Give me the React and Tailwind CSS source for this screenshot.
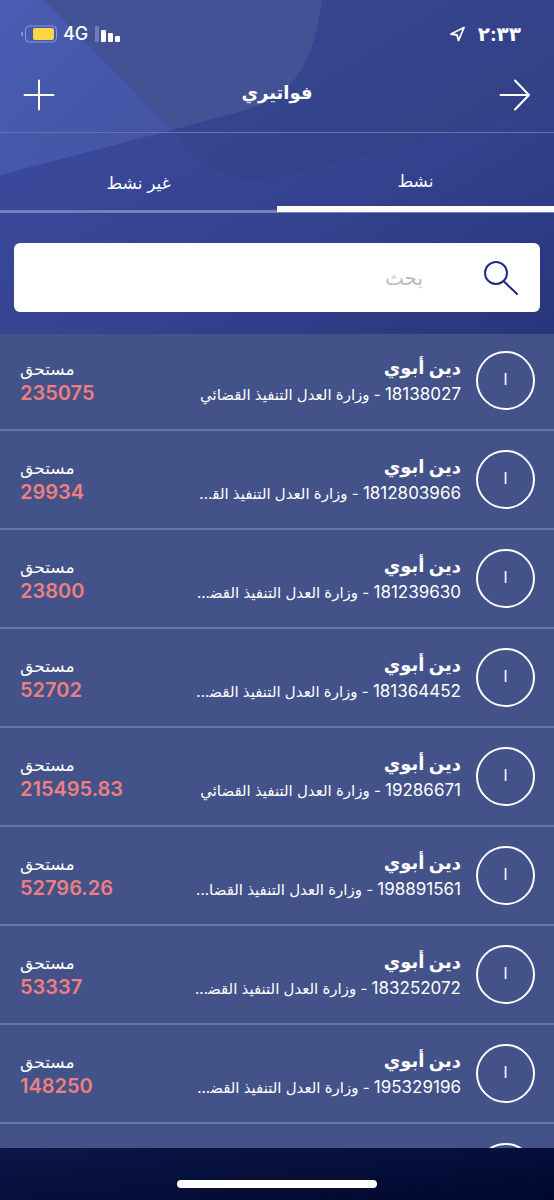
import React from "react";

const bills = [
  { name: "دين أبوي", account: "18138027", payee: "وزارة العدل التنفيذ القضائي", due: "235075" },
  { name: "دين ابوي", account: "1812803966", payee: "وزارة العدل التنفيذ الق\u200d...", due: "29934" },
  { name: "دين أبوي", account: "181239630", payee: "وزارة العدل التنفيذ القض\u200d...", due: "23800" },
  { name: "دين أبوي", account: "181364452", payee: "وزارة العدل التنفيذ القض\u200d...", due: "52702" },
  { name: "دين أبوي", account: "19286671", payee: "وزارة العدل التنفيذ القضائي", due: "215495.83" },
  { name: "دين أبوي", account: "198891561", payee: "وزارة العدل التنفيذ القضا...", due: "52796.26" },
  { name: "دين أبوي", account: "183252072", payee: "وزارة العدل التنفيذ القض\u200d...", due: "53337" },
  { name: "دين أبوي", account: "195329196", payee: "وزارة العدل التنفيذ القض\u200d...", due: "148250" },
];

function Backdrop() {
  return (
    <svg className="absolute inset-0 -z-10 h-full w-full" viewBox="0 0 554 334" preserveAspectRatio="none" aria-hidden="true">
      <defs>
        <linearGradient id="blade" x1="0" y1="0" x2="170" y2="150" gradientUnits="userSpaceOnUse">
          <stop offset="0" stopColor="#4a5db4" />
          <stop offset="1" stopColor="#4453a2" />
        </linearGradient>
        <linearGradient id="lower" x1="60" y1="90" x2="300" y2="500" gradientUnits="userSpaceOnUse">
          <stop offset="0" stopColor="#3b4a9d" />
          <stop offset="0.5" stopColor="#34428f" />
          <stop offset="1" stopColor="#28347a" />
        </linearGradient>
        <linearGradient id="upper" x1="300" y1="0" x2="400" y2="160" gradientUnits="userSpaceOnUse">
          <stop offset="0" stopColor="#364791" />
          <stop offset="1" stopColor="#324188" />
        </linearGradient>
      </defs>
      <rect width="554" height="334" fill="url(#lower)" />
      <path d="M0 0H44L172 130L0 175Z" fill="url(#blade)" />
      <path d="M44 0H322C317 32 312 58 294 80Q280 100 236 113L172 130Z" fill="#435295" />
      <path d="M172 130L236 113Q280 100 294 80C312 58 317 32 322 0H554V108L290 174C240 188 212 176 172 130Z" fill="url(#upper)" />
    </svg>
  );
}

function StatusBar() {
  return (
    <div dir="ltr" className="flex h-17 items-center justify-between pr-[33px] pl-5">
      <div className="flex items-center gap-1.5">
        <svg width="37" height="18" viewBox="0 0 37 18" role="img" aria-label="البطارية">
          <path d="M3 6Q1 7 1 9Q1 11 3 12Z" fill="#8e9ad0" />
          <rect x="5.5" y="1" width="31" height="16" rx="4" fill="none" stroke="#8e9ad0" />
          <rect x="13" y="3" width="21" height="12" rx="2" fill="#f8d749" />
        </svg>
        <span className="text-lg font-medium">4G</span>
        <svg width="26" height="16" viewBox="0 0 26 16" role="img" aria-label="قوة الإشارة">
          <rect x="1" y="0" width="4" height="16" rx="1" fill="#fff" opacity=".25" />
          <rect x="7" y="4" width="5" height="12" rx="1" fill="#fff" />
          <rect x="14" y="7" width="5" height="9" rx="1" fill="#fff" />
          <rect x="21" y="10" width="5" height="6" rx="1" fill="#fff" />
        </svg>
      </div>
      <div className="flex items-center gap-3">
        <svg width="16" height="16" viewBox="0 0 16 16" fill="none" stroke="#fff" strokeWidth="1.8" strokeLinejoin="round" aria-hidden="true">
          <path d="M14 1.5L1 8L7 9L8.5 14.5Z" />
        </svg>
        <time className="text-xl font-bold">٢:٣٣</time>
      </div>
    </div>
  );
}

function BillRow({ bill }) {
  return (
    <li className="flex h-[99px] shrink-0 items-end gap-[15px] border-b-2 border-[#6876ab] pr-[19px] pb-[19px] pl-5 first:h-[97px]">
      <div className="flex size-[59px] shrink-0 items-center justify-center rounded-full border-2 border-white pb-1 text-base">
        ا
      </div>
      <div className="flex min-w-0 flex-1 flex-col pb-[3px]">
        <h2 className="text-lg leading-7 font-bold">{bill.name}</h2>
        <p className="text-[15px] leading-6 whitespace-nowrap">
          <span className="text-[17px]">{bill.account}</span> - {bill.payee}
        </p>
      </div>
      <div dir="ltr" className="flex flex-col pb-[5px]">
        <span className="text-[17px] leading-6">مستحق</span>
        <strong className="text-xl leading-6 font-semibold text-[#ee7f80]">{bill.due}</strong>
      </div>
    </li>
  );
}

export default function App() {
  return (
    <div dir="rtl" lang="ar" className="flex h-screen flex-col overflow-hidden bg-[#435289] font-['Inter','DejaVu_Sans',sans-serif] text-white">
      <header className="relative isolate shrink-0">
        <Backdrop />
        <StatusBar />
        <div className="flex h-[65px] items-center justify-between border-b border-[#6674b3] px-[23px] pb-[11px]">
          <button type="button" aria-label="رجوع">
            <svg width="32" height="32" viewBox="0 0 32 32" fill="none" stroke="#fff" strokeWidth="2" strokeLinecap="round" strokeLinejoin="round">
              <path d="M1.5 16H30M16 1.5L30 16L16 30.5" />
            </svg>
          </button>
          <h1 className="pb-1 text-lg font-bold">فواتيري</h1>
          <button type="button" aria-label="إضافة">
            <svg width="32" height="32" viewBox="0 0 32 32" fill="none" stroke="#fff" strokeWidth="2" strokeLinecap="round">
              <path d="M1.5 16H30.5M16 1.5V30.5" />
            </svg>
          </button>
        </div>
        <div role="tablist" className="flex h-20 border-b border-[#7380bb] text-[17px]">
          <button type="button" role="tab" aria-selected="true" className="flex-1 border-b-6 border-white pt-6">نشط</button>
          <button type="button" role="tab" aria-selected="false" className="flex-1 border-b-2 border-[#7380bb] pt-6">غير نشط</button>
        </div>
        <div className="px-3.5 pt-[30px] pb-[22px]">
          <label className="flex h-[69px] items-center gap-15 rounded-md bg-white px-[21px]">
            <svg width="36" height="36" viewBox="0 0 36 36" fill="none" stroke="#1f2b85" strokeWidth="2" strokeLinecap="round" role="img" aria-label="بحث">
              <circle cx="13" cy="13" r="11" />
              <path d="M20.5 21L34 34" />
            </svg>
            <input type="text" placeholder="بحث" className="min-w-0 flex-1 bg-transparent text-xl text-gray-800 outline-none placeholder:text-[#b9bbc0]" />
          </label>
        </div>
      </header>
      <ul className="flex min-h-0 flex-1 flex-col overflow-hidden">
        {bills.map((bill) => (
          <BillRow key={bill.account} bill={bill} />
        ))}
        <li className="flex h-[99px] shrink-0 items-end px-[19px] pb-[21px]">
          <div className="size-[59px] rounded-full border-2 border-white" />
        </li>
      </ul>
      <footer className="flex h-13 shrink-0 items-end justify-center bg-linear-to-br from-[#0d1749] to-[#01082c] pb-3">
        <div className="h-2 w-[36%] rounded-full bg-white" />
      </footer>
    </div>
  );
}
